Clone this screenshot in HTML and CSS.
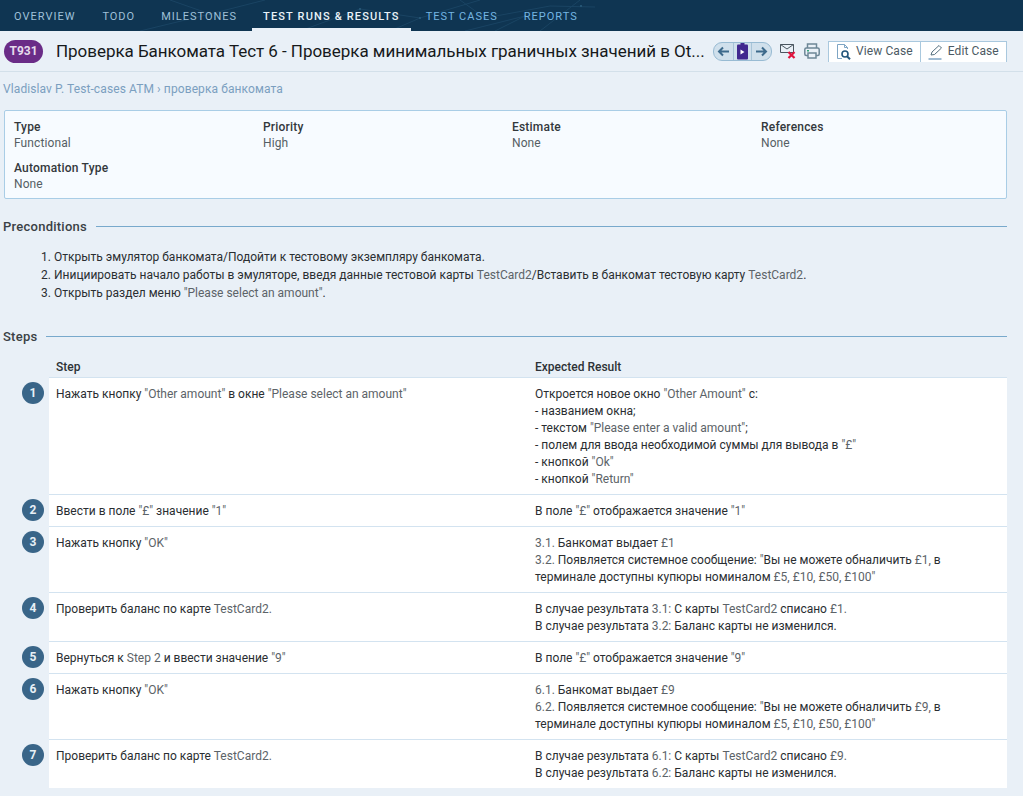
FILE: index.html
```html
<!DOCTYPE html>
<html>
<head>
	<title>Test Case</title>
	<link rel="stylesheet" href="styles.css">
</head>
<body>

	<nav class="tabs">
		<!-- faint network pattern behind the tabs -->
		<svg class="tabs-bg" width="1023" height="31" viewBox="0 0 1023 31"><path d="M170 0l40 14 55 -14M300 31l60-22 60 9 60-18M420 18l-30 13M460 0l25 18 65-12 45 1M525 16l-30 15M525 16l-60 15M580 0l-40 31M140 31l70-17" fill="none" stroke="#1a4463"/><g fill="#245473"><rect x="209" y="13" width="2" height="2"/><rect x="359" y="8" width="2" height="2"/><rect x="419" y="17" width="2" height="2"/><rect x="484" y="17" width="2" height="2"/><rect x="524" y="15" width="2" height="2"/><rect x="580" y="5" width="2" height="2"/></g></svg>
		<a class="tab tab-first">Overview</a>
		<a class="tab">Todo</a>
		<a class="tab">Milestones</a>
		<a class="tab tab-active">Test Runs &amp; Results</a>
		<a class="tab tab-light">Test Cases</a>
		<a class="tab tab-light">Reports</a>
	</nav>

	<header class="title-bar">
		<span class="case-id">T931</span>
		<h1 class="case-title">Проверка Банкомата Тест 6 - Проверка минимальных граничных значений в Ot...</h1>
		<div class="pager">
			<svg width="19" height="17" viewBox="0 0 19 17"><path d="M15 8.500H5M9 4.500l-4 4 4 4" fill="none" stroke="#3d6a8c" stroke-width="2"/></svg>
			<svg class="pager-mid" width="17" height="17" viewBox="0 0 17 17"><rect x="3" y="1.500" width="11" height="15" rx="1" fill="#41288f"/><rect x="6.500" y="0" width="4" height="2" fill="#41288f"/><path d="M6.500 6.500v5l4-2.500z" fill="#fff"/></svg>
			<svg width="19" height="17" viewBox="0 0 19 17"><path d="M4 8.500h10M10 4.500l4 4-4 4" fill="none" stroke="#3d6a8c" stroke-width="2"/></svg>
		</div>
		<svg class="icon-mail" width="17" height="18" viewBox="0 0 17 18"><path d="M.5 2.500h13v8H.5zM.5 2.500l6.500 4.500 6.500-4.500" fill="none" stroke="#4a5660"/><path d="M8.500 10l6 6M14.500 10l-6 6" stroke="#e0123c" stroke-width="2.200"/></svg>
		<svg class="icon-print" width="16" height="18" viewBox="0 0 16 18"><path d="M3.500 6V2h9v4" fill="none" stroke="#6d8797" stroke-width="1.500"/><rect x=".8" y="6" width="14.400" height="7.500" rx="1.500" fill="none" stroke="#6d8797" stroke-width="1.500"/><path d="M4 11h8v5H4z" fill="#eaf1f8" stroke="#6d8797" stroke-width="1.500"/><rect x="3" y="8" width="2" height="1.500" fill="#35a37a"/></svg>
		<div class="case-actions">
			<a class="case-btn">
				<svg width="16" height="18" viewBox="0 0 16 18"><path d="M8.500 1.500h-7v14H6M8.500 1.500l3 3V6M8.500 1.500v3h3" fill="none" stroke="#7ea5c4"/><circle cx="9" cy="11" r="3" fill="none" stroke="#24567c" stroke-width="1.600"/><path d="M11 13.200l3 3" stroke="#24567c" stroke-width="2"/></svg>
				View Case
			</a>
			<a class="case-btn">
				<svg width="16" height="18" viewBox="0 0 16 18"><path d="M3 12l1-3 7-6.500 2.500 2.500-7 6.500z" fill="none" stroke="#55707f"/><path d="M.5 16h13" stroke="#7ea5c4" stroke-width="1.500"/></svg>
				Edit Case
			</a>
		</div>
	</header>

	<main class="content">
		<div class="breadcrumb">Vladislav P. Test-cases ATM › проверка банкомата</div>

		<section class="fields">
			<div class="field"><b>Type</b><span>Functional</span></div>
			<div class="field"><b>Priority</b><span>High</span></div>
			<div class="field"><b>Estimate</b><span>None</span></div>
			<div class="field"><b>References</b><span>None</span></div>
			<div class="field"><b>Automation Type</b><span>None</span></div>
		</section>

		<h2 class="section-head"><span>Preconditions</span></h2>
		<ol class="preconditions">
			<li>Открыть эмулятор банкомата/Подойти к тестовому экземпляру банкомата.</li>
			<li>Инициировать начало работы в эмуляторе, введя данные тестовой карты <span class="en">TestCard2</span>/Вставить в банкомат тестовую карту <span class="en">TestCard2</span>.</li>
			<li>Открыть раздел меню <span class="en">"Please select an amount"</span>.</li>
		</ol>

		<h2 class="section-head section-steps"><span>Steps</span></h2>

		<div class="steps-head">
			<div>Step</div>
			<div>Expected Result</div>
		</div>

		<div class="step">
			<span class="step-no">1</span>
			<div class="step-body">
				<div>Нажать кнопку <span class="en">"Other amount"</span> в окне <span class="en">"Please select an amount"</span></div>
				<div>Откроется новое окно <span class="en">"Other Amount"</span> с:<br>- названием окна;<br>- текстом <span class="en">"Please enter a valid amount"</span>;<br>- полем для ввода необходимой суммы для вывода в <span class="en">"£"</span><br>- кнопкой <span class="en">"Ok"</span><br>- кнопкой <span class="en">"Return"</span></div>
			</div>
		</div>
		<div class="step">
			<span class="step-no">2</span>
			<div class="step-body">
				<div>Ввести в поле <span class="en">"£"</span> значение <span class="en">"1"</span></div>
				<div>В поле <span class="en">"£"</span> отображается значение <span class="en">"1"</span></div>
			</div>
		</div>
		<div class="step">
			<span class="step-no">3</span>
			<div class="step-body">
				<div>Нажать кнопку <span class="en">"OK"</span></div>
				<div><span class="en">3.1.</span> Банкомат выдает <span class="en">£1</span><br><span class="en">3.2.</span> Появляется системное сообщение: <span class="en">"</span>Вы не можете обналичить <span class="en">£1,</span> в<br>терминале доступны купюры номиналом <span class="en">£5, £10, £50, £100"</span></div>
			</div>
		</div>
		<div class="step">
			<span class="step-no">4</span>
			<div class="step-body">
				<div>Проверить баланс по карте <span class="en">TestCard2.</span></div>
				<div>В случае результата <span class="en">3.1:</span> С карты <span class="en">TestCard2</span> списано <span class="en">£1.</span><br>В случае результата <span class="en">3.2:</span> Баланс карты не изменился.</div>
			</div>
		</div>
		<div class="step">
			<span class="step-no">5</span>
			<div class="step-body">
				<div>Вернуться к <span class="en">Step 2</span> и ввести значение <span class="en">"9"</span></div>
				<div>В поле <span class="en">"£"</span> отображается значение <span class="en">"9"</span></div>
			</div>
		</div>
		<div class="step">
			<span class="step-no">6</span>
			<div class="step-body">
				<div>Нажать кнопку <span class="en">"OK"</span></div>
				<div><span class="en">6.1.</span> Банкомат выдает <span class="en">£9</span><br><span class="en">6.2.</span> Появляется системное сообщение: <span class="en">"</span>Вы не можете обналичить <span class="en">£9,</span> в<br>терминале доступны купюры номиналом <span class="en">£5, £10, £50, £100"</span></div>
			</div>
		</div>
		<div class="step">
			<span class="step-no">7</span>
			<div class="step-body">
				<div>Проверить баланс по карте <span class="en">TestCard2.</span></div>
				<div>В случае результата <span class="en">6.1:</span> С карты <span class="en">TestCard2</span> списано <span class="en">£9.</span><br>В случае результата <span class="en">6.2:</span> Баланс карты не изменился.</div>
			</div>
		</div>
	</main>

</body>
</html>
```

FILE: styles.css
```css
html, body {
	margin: 0;
	height: 796px;
	overflow: hidden;
}

body {
	background: #e9f0f7;
	color: #2a2e31;
	font-family: "Roboto", sans-serif;
	font-size: 12px;
	line-height: 17px;
}

.en {
	color: #5c6368;
}

.tabs {
	position: relative;
	display: flex;
	gap: 4px;
	height: 31px;
	padding-left: 3px;
	background: #0f3552;
	box-sizing: border-box;
}

.tabs-bg {
	position: absolute;
	top: 0;
	left: 0;
}

.tab {
	position: relative;
	padding: 8px 11px 0;
	color: #9fc0d8;
	font-size: 11px;
	letter-spacing: 1px;
	text-transform: uppercase;
}

.tab-first {
	margin-right: 1px;
}

.tab-active {
	border-bottom: 3px solid #e9f0f7;
	color: #e8f2f8;
	font-weight: 500;
	letter-spacing: 1.15px;
}

.tab-light {
	color: #74b5e2;
}

.title-bar {
	display: flex;
	align-items: center;
	height: 40px;
	padding-left: 4px;
	border-bottom: 1px solid #d3e0ea;
}

.case-id {
	flex-shrink: 0;
	width: 39px;
	height: 23px;
	border-radius: 12px;
	background: #6a2c87;
	color: #e6dcec;
	font-size: 12px;
	font-weight: bold;
	line-height: 23px;
	text-align: center;
}

.case-title {
	flex-shrink: 0;
	width: 657px;
	margin: 0 0 0 13px;
	color: #16191b;
	font-size: 17px;
	font-weight: 400;
	letter-spacing: -.04px;
	white-space: nowrap;
}

.pager {
	display: flex;
	align-items: center;
	flex-shrink: 0;
	height: 17px;
	background: #d0e0ec;
	border: 1px solid #98bbd3;
	border-radius: 9px;
}

.pager-mid {
	border-left: 1px solid #a8c4d8;
	border-right: 1px solid #a8c4d8;
}

.icon-mail {
	margin-left: 8px;
	flex-shrink: 0;
}

.icon-print {
	margin-left: 7px;
	flex-shrink: 0;
}

.case-actions {
	display: flex;
	flex-shrink: 0;
	margin-left: 8px;
	background: #fff;
	border: 1px solid #a9c8de;
	border-bottom: 0;
}

.case-btn {
	display: flex;
	align-items: center;
	gap: 4px;
	height: 20px;
	padding: 0 7px;
	color: #4c5a63;
	letter-spacing: .1px;
	white-space: nowrap;
}

.case-btn + .case-btn {
	border-left: 1px solid #a9c8de;
}

.content {
	padding: 0 16px 0 3px;
}

.breadcrumb {
	margin-top: 9px;
	color: #7b9fc0;
	letter-spacing: .1px;
}

.fields {
	display: grid;
	grid-template-columns: repeat(4, 249px);
	row-gap: 8px;
	margin: 12px 0 0 1px;
	padding: 8px 9px 5px;
	background: #f7fbff;
	border: 1px solid #a9cde6;
	border-radius: 2px;
}

.field b {
	display: block;
	color: #33383c;
	font-weight: 500;
	line-height: 16px;
	letter-spacing: .2px;
}

.field span {
	color: #555e64;
	letter-spacing: .1px;
}

.section-head {
	display: flex;
	align-items: center;
	margin: 19px 0 0;
	color: #3a4145;
	font-size: 13px;
	font-weight: 500;
	letter-spacing: .25px;
}

.section-head::after {
	content: "";
	flex: 1;
	height: 1px;
	margin-left: 9px;
	background: #78a9cc;
}

.preconditions {
	margin: 13px 0 0;
	padding-left: 51px;
	line-height: 18px;
}

.section-steps {
	margin-top: 26px;
}

.steps-head {
	display: grid;
	grid-template-columns: 479px 1fr;
	margin: 14px 0 0 46px;
	padding: 0 7px;
	height: 18px;
	color: #2d3236;
	font-weight: 500;
}

.step {
	display: flex;
	align-items: flex-start;
}

.step-no {
	flex-shrink: 0;
	width: 22px;
	height: 22px;
	margin: 5px 5px 0 19px;
	border-radius: 50%;
	background: #396588;
	color: #e8f0f6;
	font-size: 12px;
	font-weight: bold;
	line-height: 22px;
	text-align: center;
}

.step-body {
	display: grid;
	grid-template-columns: 479px 1fr;
	flex: 1;
	padding: 8px 40px 6px 7px;
	background: #fff;
	border-top: 1px solid #d3e3f0;
}
```
